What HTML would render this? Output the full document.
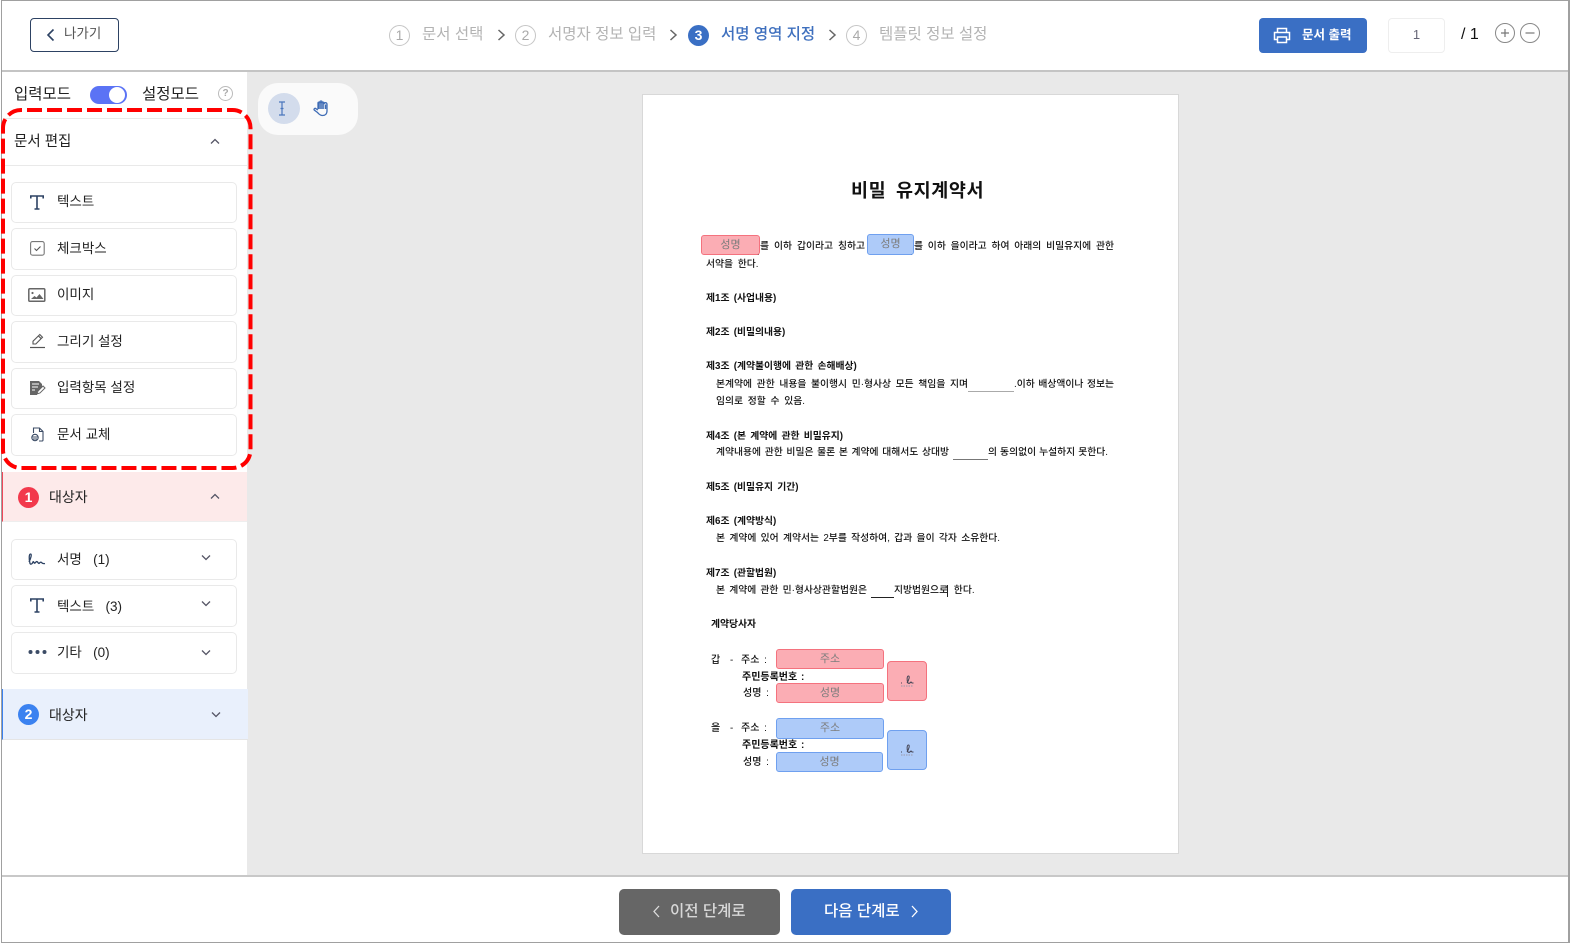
<!DOCTYPE html>
<html lang="ko"><head><meta charset="utf-8"><style>
html,body{margin:0;padding:0;background:#fff}
body{width:1571px;height:943px;position:relative;overflow:hidden;font-family:"Liberation Sans","Noto Sans CJK KR",sans-serif;color:#222}
.a,.t,.d,.b,.i,.box{position:absolute}
.t{white-space:nowrap;line-height:20px;height:20px;font-size:14px}
.d{white-space:nowrap;line-height:14px;height:14px;font-size:9.8px;color:#111;font-weight:500}
.d.s{font-weight:700}
.j{text-align:justify;text-align-last:justify;white-space:normal}
.i{left:11px;width:224px;height:39px;background:#fff;border:1px solid #e9e9e9;border-radius:5px}
.box{box-sizing:border-box;border-radius:3px;text-align:center;color:#7d7d7d;font-size:11px;line-height:19px}
.r{background:rgba(248,118,130,.6);border:1px solid #f4727e}
.u{background:rgba(108,160,244,.55);border:1px solid #6fa0ef}
svg{position:absolute;overflow:visible}
.c{border-radius:50%;box-sizing:border-box;position:absolute;text-align:center}
.st{color:#b3b3b3;font-size:15.5px;top:25px}
</style></head><body>

<!-- regions -->
<div class="a" style="left:247px;top:72px;width:1322px;height:803px;background:#e9e9e9"></div>
<div class="a" style="left:2px;top:70px;width:1567px;height:2px;background:#c4c4c4"></div>
<div class="a" style="left:2px;top:875px;width:1567px;height:2px;background:#c8c8c8"></div>
<div class="a" style="left:1px;top:0;width:1569px;height:943px;box-sizing:border-box;border:1px solid #a0a0a0;border-right-width:2px"></div>

<!-- header -->
<div class="a" style="left:30px;top:18px;width:87px;height:32px;border:1px solid #2d4263;border-radius:4px"></div>
<svg style="left:46px;top:28px" width="10" height="14" fill="none" stroke="#2d4263" stroke-width="1.6"><path d="M7.5 1.5 2 7l5.5 5.5"/></svg>
<div class="t" style="left:64px;top:24px;font-size:13.5px;color:#555">나가기</div>

<div class="c" style="left:389px;top:25px;width:21px;height:21px;border:1.3px solid #c6c6c6;color:#aaa;font-size:14px;line-height:19px">1</div>
<div class="t st" style="left:422px">문서 선택</div>
<svg style="left:497px;top:29px" width="9" height="12" fill="none" stroke="#666" stroke-width="1.5"><path d="M1.5 1 7 6l-5.5 5"/></svg>
<div class="c" style="left:515px;top:25px;width:21px;height:21px;border:1.3px solid #c6c6c6;color:#aaa;font-size:14px;line-height:19px">2</div>
<div class="t st" style="left:548px">서명자 정보 입력</div>
<svg style="left:669px;top:29px" width="9" height="12" fill="none" stroke="#666" stroke-width="1.5"><path d="M1.5 1 7 6l-5.5 5"/></svg>
<div class="c" style="left:688px;top:25px;width:21px;height:21px;background:#3a6fc4;color:#fff;font-size:14px;font-weight:700;line-height:21px">3</div>
<div class="t st" style="left:721px;color:#3f70be;font-weight:500">서명 영역 지정</div>
<svg style="left:828px;top:29px" width="9" height="12" fill="none" stroke="#666" stroke-width="1.5"><path d="M1.5 1 7 6l-5.5 5"/></svg>
<div class="c" style="left:846px;top:25px;width:21px;height:21px;border:1.3px solid #c6c6c6;color:#aaa;font-size:14px;line-height:19px">4</div>
<div class="t st" style="left:879px">템플릿 정보 설정</div>

<div class="a" style="left:1259px;top:18px;width:108px;height:35px;background:#3a6fc4;border-radius:4px"></div>
<svg style="left:1273px;top:27px" width="18" height="17" fill="none" stroke="#fff" stroke-width="1.5"><path d="M4.5 5V1.5h9V5M4.5 12.5H1.5V5.500h15v7h-3"/><rect x="4.5" y="10" width="9" height="5.5"/></svg>
<div class="t" style="left:1302px;top:25px;color:#fff;font-size:12.5px;font-weight:700">문서 출력</div>
<div class="a" style="left:1388px;top:18px;width:55px;height:33px;border:1px solid #eee;border-radius:4px"></div>
<div class="t" style="left:1388px;top:25px;width:57px;text-align:center;color:#667;font-size:13px">1</div>
<div class="t" style="left:1461px;top:25px;font-size:16px;color:#111">/ 1</div>
<div class="c" style="left:1495px;top:23px;width:20px;height:20px;border:1.2px solid #888"></div>
<svg style="left:1495px;top:23px" width="20" height="20" stroke="#777" stroke-width="1.2"><path d="M6 10h8M10 6v8"/></svg>
<div class="c" style="left:1520px;top:23px;width:20px;height:20px;border:1.2px solid #888"></div>
<svg style="left:1520px;top:23px" width="20" height="20" stroke="#777" stroke-width="1.2"><path d="M5.5 10h9"/></svg>

<!-- sidebar top -->
<div class="t" style="left:14px;top:85px;font-size:15.5px;color:#222">입력모드</div>
<div class="a" style="left:90px;top:86px;width:37px;height:18px;border-radius:9px;background:#5b73f5"></div>
<div class="c" style="left:109px;top:87px;width:16px;height:16px;background:#fff"></div>
<div class="t" style="left:142px;top:85px;font-size:15.5px;color:#222">설정모드</div>
<div class="c" style="left:218px;top:86px;width:15px;height:15px;border:1.2px solid #bbb;color:#aaa;font-size:10px;line-height:13px;font-weight:700">?</div>

<div class="a" style="left:5px;top:118px;width:242px;height:1px;background:#e9e9e9"></div>
<div class="t" style="left:14px;top:132px;color:#222;font-size:14.5px">문서 편집</div>
<svg style="left:210px;top:138px" width="10" height="7" fill="none" stroke="#556" stroke-width="1.3"><path d="M1 5.500 5 1.500l4 4"/></svg>
<div class="a" style="left:5px;top:165px;width:242px;height:1px;background:#e9e9e9"></div>

<div class="i" style="top:182px"></div>
<div class="i" style="top:228px;height:40px"></div>
<div class="i" style="top:275px"></div>
<div class="i" style="top:321px;height:40px"></div>
<div class="i" style="top:368px"></div>
<div class="i" style="top:414px;height:40px"></div>

<svg style="left:30px;top:195px" width="14" height="15" fill="none" stroke="#2d4263" stroke-width="1.6"><path d="M.8 3.500V1h12.400v2.500M7 1v13M4.500 14h5"/></svg>
<div class="t" style="left:57px;top:192px;font-size:13.5px">텍스트</div>
<svg style="left:30px;top:241px" width="15" height="15" fill="none" stroke="#777" stroke-width="1.1"><rect x=".6" y=".6" width="13.6" height="13.600" rx="2"/><path d="M4.500 7.500l2 2 4-4" stroke="#555"/></svg>
<div class="t" style="left:57px;top:239px;font-size:13.5px">체크박스</div>
<svg style="left:28px;top:288px" width="18" height="14" fill="none" stroke="#666" stroke-width="1.5"><rect x=".8" y=".8" width="16" height="12.400" rx="1"/><circle cx="4.500" cy="5" r="1.100" fill="#666" stroke="none"/><path d="M3 11l3.500-3 2 1.500 3-3.500 4 5z" fill="#666" stroke="none"/></svg>
<div class="t" style="left:57px;top:285px;font-size:13.5px">이미지</div>
<svg style="left:30px;top:333px" width="15" height="16" fill="none" stroke="#555" stroke-width="1.100"><path d="M3 11V8.200L9.800 1.500l2.700 2.700L5.800 11zM8.500 3l2.700 2.700"/><path d="M0 14.500h15" stroke-width="1.200"/></svg>
<div class="t" style="left:57px;top:332px;font-size:13.5px">그리기 설정</div>
<svg style="left:30px;top:381px" width="15" height="15"><path d="M0 0h9l3 3v3L7 11v3H0z" fill="#666"/><path d="M2 3h7M2 6h6M2 9h3" stroke="#fff" stroke-width="1"/><path d="M7 13l1-3 5-5 2 2-5 5z" fill="#fff" stroke="#666" stroke-width="1"/></svg>
<div class="t" style="left:57px;top:378px;font-size:13.5px">입력항목 설정</div>
<svg style="left:31px;top:427px" width="13" height="15" fill="none" stroke="#3c4c66" stroke-width="1.100"><path d="M2.500 6V1h6l3.500 3.500V13a1 1 0 0 1-1 1H8M8.500 1v3.500H12"/><circle cx="4" cy="10.500" r="3.200"/><path d="M1.500 10h5M2 12h4"/></svg>
<div class="t" style="left:57px;top:425px;font-size:13.5px">문서 교체</div>

<svg style="left:0;top:0" width="260" height="480" fill="none"><rect x="3" y="110" width="247.500" height="358" rx="18" stroke="#f00" stroke-width="4" stroke-dasharray="15 5" stroke-dashoffset="-6"/></svg>

<!-- recipient 1 -->
<div class="a" style="left:2px;top:472px;width:245px;height:50px;background:#fdeaea;border-left:1.500px solid #f0485a;box-sizing:border-box;border-bottom:1px solid #eee"></div>
<div class="c" style="left:18px;top:487px;width:21px;height:21px;background:#f2394c;color:#fff;font-size:14px;font-weight:700;line-height:21px">1</div>
<div class="t" style="left:49px;top:487px;font-size:14px">대상자</div>
<svg style="left:210px;top:493px" width="10" height="7" fill="none" stroke="#556" stroke-width="1.300"><path d="M1 5.500 5 1.500l4 4"/></svg>

<div class="i" style="top:539px"></div>
<div class="i" style="top:585px;height:40px"></div>
<div class="i" style="top:632px;height:40px"></div>
<svg style="left:28px;top:553px" width="19" height="13" fill="none" stroke="#2d4263" stroke-width="1.300"><path d="M1 9C3 5 4 1 2.500 1 1 1 .8 6 2 10.500c1 1.500 2.500 0 3-1.500s1 2 2 1 1.500-2 2.500-1 1 2 2 1 1.500-1 2-.5 1 1.500 3.500 1"/></svg>
<div class="t" style="left:57px;top:550px;font-size:13.5px">서명&nbsp;&nbsp;&nbsp;(1)</div>
<svg style="left:201px;top:554px" width="10" height="7" fill="none" stroke="#556" stroke-width="1.300"><path d="M1 1.500 5 5.500l4-4"/></svg>
<svg style="left:30px;top:598px" width="14" height="15" fill="none" stroke="#2d4263" stroke-width="1.600"><path d="M.8 3.500V1h12.400v2.500M7 1v13M4.500 14h5"/></svg>
<div class="t" style="left:57px;top:597px;font-size:13.5px">텍스트&nbsp;&nbsp;&nbsp;(3)</div>
<svg style="left:201px;top:600px" width="10" height="7" fill="none" stroke="#556" stroke-width="1.300"><path d="M1 1.500 5 5.500l4-4"/></svg>
<svg style="left:28px;top:649px" width="19" height="6" fill="#3c4c66"><circle cx="2.500" cy="3" r="2"/><circle cx="9.500" cy="3" r="2"/><circle cx="16.500" cy="3" r="2"/></svg>
<div class="t" style="left:57px;top:643px;font-size:13.5px">기타&nbsp;&nbsp;&nbsp;(0)</div>
<svg style="left:201px;top:649px" width="10" height="7" fill="none" stroke="#556" stroke-width="1.300"><path d="M1 1.500 5 5.500l4-4"/></svg>

<div class="a" style="left:2px;top:689px;width:246px;height:51px;background:#e9f0fc;border-left:1.500px solid #3b82f0;box-sizing:border-box;border-bottom:1px solid #e5e5e5"></div>
<div class="c" style="left:18px;top:704px;width:21px;height:21px;background:#3b82f0;color:#fff;font-size:14px;font-weight:700;line-height:21px">2</div>
<div class="t" style="left:49px;top:705px;font-size:14px">대상자</div>
<svg style="left:211px;top:711px" width="10" height="7" fill="none" stroke="#556" stroke-width="1.300"><path d="M1 1.500 5 5.500l4-4"/></svg>

<!-- tools -->
<div class="a" style="left:258px;top:83px;width:100px;height:52px;background:#fafafa;border-radius:20px"></div>
<div class="c" style="left:268px;top:93px;width:32px;height:31px;background:#d3dcec"></div>
<svg style="left:278px;top:101px" width="8" height="15" fill="none" stroke="#4a76bd" stroke-width="1.200"><path d="M1 1h6M1 14h6M4 1v13M2.500 7.500h3"/></svg>
<svg style="left:313px;top:100px" width="16" height="17" fill="none" stroke="#3f6cb5" stroke-width="1.300"><path d="M5 9V3.200a1 1 0 0 1 2 0V2a1 1 0 0 1 2 0v1.200a1 1 0 0 1 2 0v1a1 1 0 0 1 3 0V11c0 3-2 4.500-4.500 4.500C7 15.500 6 14 4.500 12.500L1.200 10c-.8-1 .8-2.200 1.700-1.300L5 10"/><path d="M6 3v6M8 2v7M10 3v6M12.500 4.500V9" stroke-width="1.600"/></svg>

<!-- document -->
<div class="a" style="left:642px;top:94px;width:535px;height:758px;background:#fff;border:1px solid #d8d8d8"></div>
<div class="d s" style="left:851px;top:181px;line-height:20px;height:20px;font-size:18.5px;letter-spacing:.6px;word-spacing:4px">비밀 유지계약서</div>

<div class="d j" style="left:760px;top:240px;width:105px">를 이하 갑이라고 칭하고</div>
<div class="a" style="left:711px;top:254px;width:48px;height:1px;background:#555"></div>
<div class="a" style="left:870px;top:254px;width:42px;height:1px;background:#222"></div>
<div class="d j" style="left:914px;top:240px;width:200px">를 이하 을이라고 하여 아래의 비밀유지에 관한</div>
<div class="d" style="left:706px;top:258px;word-spacing:2px">서약을 한다.</div>
<div class="d s" style="left:706px;top:292px;word-spacing:1.5px">제1조 (사업내용)</div>
<div class="d s" style="left:706px;top:326px;word-spacing:1.5px">제2조 (비밀의내용)</div>
<div class="d s" style="left:706px;top:360px;word-spacing:1.5px">제3조 (계약불이행에 관한 손해배상)</div>
<div class="d j" style="left:716px;top:378px;width:252px">본계약에 관한 내용을 불이행시 민·형사상 모든 책임을 지며</div>
<div class="a" style="left:968px;top:391px;width:46px;height:1px;background:#aaa"></div>
<div class="d j" style="left:1014px;top:378px;width:100px">.이하 배상액이나 정보는</div>
<div class="d" style="left:716px;top:395px;word-spacing:2px">임의로 정할 수 있음.</div>
<div class="d s" style="left:706px;top:430px;word-spacing:1.5px">제4조 (본 계약에 관한 비밀유지)</div>
<div class="d j" style="left:716px;top:446px;width:233px">계약내용에 관한 비밀은 물론 본 계약에 대해서도 상대방</div>
<div class="a" style="left:953px;top:459px;width:35px;height:1px;background:#777"></div>
<div class="d j" style="left:988px;top:446px;width:120px">의 동의없이 누설하지 못한다.</div>
<div class="d s" style="left:706px;top:481px;word-spacing:1.5px">제5조 (비밀유지 기간)</div>
<div class="d s" style="left:706px;top:515px;word-spacing:1.5px">제6조 (계약방식)</div>
<div class="d j" style="left:716px;top:532px;width:284px">본 계약에 있어 계약서는 2부를 작성하여, 갑과 을이 각자 소유한다.</div>
<div class="d s" style="left:706px;top:567px;word-spacing:1.5px">제7조 (관할법원)</div>
<div class="d j" style="left:716px;top:584px;width:151px">본 계약에 관한 민·형사상관할법원은</div>
<div class="a" style="left:871px;top:597px;width:23px;height:1px;background:#222"></div>
<div class="d" style="left:894px;top:584px;word-spacing:3px">지방법원으로 한다.</div>
<div class="a" style="left:947px;top:585px;width:1px;height:12px;background:#222"></div>
<div class="d s" style="left:711px;top:618px">계약당사자</div>
<div class="d" style="left:711px;top:654px;font-size:10px">갑</div>
<div class="d" style="left:730px;top:654px">-</div>
<div class="d" style="left:741px;top:654px;word-spacing:2px;font-size:10px">주소 :</div>
<div class="d s" style="left:742px;top:671px;font-size:10px;word-spacing:1px">주민등록번호 :</div>
<div class="d" style="left:743px;top:687px;word-spacing:2px;font-size:10px">성명 :</div>
<div class="d" style="left:711px;top:722px;font-size:10px">을</div>
<div class="d" style="left:730px;top:722px">-</div>
<div class="d" style="left:741px;top:722px;word-spacing:2px;font-size:10px">주소 :</div>
<div class="d s" style="left:742px;top:739px;font-size:10px;word-spacing:1px">주민등록번호 :</div>
<div class="d" style="left:743px;top:756px;word-spacing:2px;font-size:10px">성명 :</div>

<div class="box r" style="left:701px;top:235px;width:59px;height:20px">성명</div>
<div class="box u" style="left:867px;top:234px;width:47px;height:21px">성명</div>
<div class="box r" style="left:776px;top:649px;width:108px;height:20px">주소</div>
<div class="box r" style="left:776px;top:683px;width:108px;height:20px">성명</div>
<div class="box u" style="left:776px;top:718px;width:108px;height:21px">주소</div>
<div class="box u" style="left:776px;top:752px;width:107px;height:20px">성명</div>
<div class="box r" style="left:887px;top:661px;width:40px;height:40px;border-radius:4px"></div>
<div class="box u" style="left:887px;top:730px;width:40px;height:40px;border-radius:4px"></div>
<svg style="left:900px;top:675px" width="14" height="12" fill="none" stroke="#445" stroke-width="1"><path d="M1 8h1M7 8c2-3 3-7 1.500-7S6.500 5 8 8c1 1 2 0 3-1l1 1h1.500"/><path d="M1 11h12" stroke-dasharray="1.500 1" stroke="#99a"/></svg>
<svg style="left:900px;top:744px" width="14" height="12" fill="none" stroke="#445" stroke-width="1"><path d="M1 8h1M7 8c2-3 3-7 1.500-7S6.500 5 8 8c1 1 2 0 3-1l1 1h1.500"/><path d="M1 11h12" stroke-dasharray="1.500 1" stroke="#99a"/></svg>

<!-- footer -->
<div class="a" style="left:619px;top:889px;width:161px;height:46px;background:#666;border-radius:5px"></div>
<svg style="left:652px;top:905px" width="9" height="13" fill="none" stroke="#ddd" stroke-width="1.300"><path d="M7 1 2 6.500 7 12"/></svg>
<div class="t" style="left:670px;top:902px;font-size:15.5px;font-weight:500;color:#d8d8d8">이전 단계로</div>
<div class="a" style="left:791px;top:889px;width:160px;height:46px;background:#3a6fc4;border-radius:5px"></div>
<div class="t" style="left:824px;top:902px;font-size:15.5px;font-weight:500;color:#fff">다음 단계로</div>
<svg style="left:910px;top:905px" width="9" height="13" fill="none" stroke="#fff" stroke-width="1.300"><path d="M2 1l5 5.500L2 12"/></svg>
</body></html>
